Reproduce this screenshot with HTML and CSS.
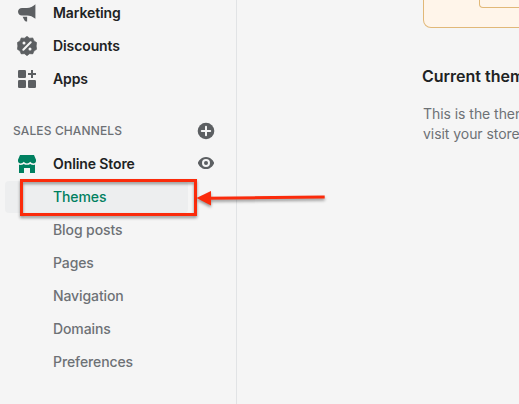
FILE: index.html
```html
<!DOCTYPE html>
<html lang="en">
<head>
    <meta charset="UTF-8">
    <meta name="viewport" content="width=device-width, initial-scale=1.0">
    <title>Online Store - Themes</title>
    <link rel="stylesheet" href="styles.css">
</head>

<body>
    <div class="app">
        <nav class="sidebar">
            <a class="nav-item">
                <svg class="icon" viewBox="0 0 20 20"><path d="M18.4 1.2v14.6c-2.5-2.1-5.4-3.3-8.4-3.3H5A4 4 0 0 1 1 8.8c0-2.200 1.800-3.700 4-3.700h5c3-.2 6-1.700 8.400-3.900z"/><path d="M5.600 13.700h4.500v4.700c-1.500 0-2.200-.4-2.800-1.500z"/></svg>
                <span class="label">Marketing</span>
            </a>
            <a class="nav-item">
                <svg class="icon" viewBox="0 0 20 20"><path d="M10 .3l2.600 1.900 3.200-.3 1.200 3 2.700 1.700L19.200 10l.5 3.200-2.700 1.800-1.200 2.900-3.200-.2L10 19.700l-2.600-2-3.200.2L3 15 .3 13.200.8 10 .3 6.600 3 4.900l1.200-3 3.200.3z" stroke="#5c5f62" stroke-width=".6" stroke-linejoin="round"/><path d="M6.300 13.700l7.400-7.400" stroke="#f5f5f5" stroke-width="2" stroke-linecap="round"/><circle cx="7" cy="7" r="1.500" fill="#f5f5f5"/><circle cx="13" cy="13" r="1.500" fill="#f5f5f5"/></svg>
                <span class="label">Discounts</span>
            </a>
            <a class="nav-item">
                <svg class="icon" viewBox="0 0 20 20"><rect x="1" y="1" width="8" height="8" rx="1.300"/><rect x="1" y="11" width="8" height="8" rx="1.300"/><rect x="11" y="11" width="8" height="8" rx="1.300"/><path d="M14 1h2v3h3v2h-3v3h-2V6h-3V4h3z"/></svg>
                <span class="label">Apps</span>
            </a>

            <div class="section-title">
                <span>SALES CHANNELS</span>
                <svg class="icon" viewBox="0 0 20 20"><circle cx="10" cy="10" r="8.300"/><path d="M10 5.800v8.400M5.800 10h8.400" stroke="#f5f5f5" stroke-width="2" stroke-linecap="round"/></svg>
            </div>

            <a class="nav-item">
                <svg class="icon green" viewBox="0 0 20 20"><path d="M3 1h14l2 4.800V7c0 1.500-1.200 2.400-2.600 2.400-1.200 0-2.200-.7-3.200-1.600-1 1-2 1.600-3.200 1.600S7.800 8.800 6.800 7.800C5.800 8.700 4.800 9.400 3.600 9.400 2.200 9.400 1 8.500 1 7V5.800z"/><path d="M2 10.800c1.900.4 3.500 0 4.800-.9 2 1.200 4.400 1.200 6.400 0 1.300.9 2.900 1.300 4.800.9V19h-5v-5H7v5H2z"/></svg>
                <span class="label">Online Store</span>
                <svg class="icon eye" viewBox="0 0 20 20"><path fill-rule="evenodd" d="M18 9.600C17.600 8.500 15.200 4 10 4S2.400 8.500 2 9.600v.8C2.400 11.500 4.800 16 10 16s7.600-4.500 8-5.600zM10 14a4 4 0 1 1 0-8 4 4 0 0 1 0 8z"/><circle cx="10" cy="10" r="2"/></svg>
            </a>
            <a class="sub-item active">Themes</a>
            <a class="sub-item">Blog posts</a>
            <a class="sub-item">Pages</a>
            <a class="sub-item">Navigation</a>
            <a class="sub-item">Domains</a>
            <a class="sub-item">Preferences</a>
        </nav>

        <main class="content">
            <div class="banner">
                <div class="banner-button"></div>
            </div>
            <h2 class="heading">Current theme</h2>
            <p class="description">This is the theme customers see when they<br>visit your store.</p>
        </main>
    </div>

    <!-- callout for the Themes link -->
    <div class="highlight"></div>
    <svg class="arrow" viewBox="0 0 140 30">
        <path d="M18 15.200L134.700 14" stroke="#fb2b0b" stroke-width="3"/>
        <path d="M6.500 15.100L21 8v14.500z" fill="#fb2b0b"/>
    </svg>
</body>
</html>
```
FILE: styles.css
```css
* {
    box-sizing: border-box;
}
body {
    margin: 0;
    height: 404px;
    overflow: hidden;
    background-color: #f5f5f5;
    font-family: Inter, "Liberation Sans", sans-serif;
    font-size: 14px;
    color: #202223;
}
.app {
    display: flex;
    height: 404px;
}
.sidebar {
    flex: none;
    width: 237px;
    height: 407px;
    margin-top: -3px;
    border-right: 1px solid #e1e3e5;
}
.nav-item {
    display: flex;
    align-items: center;
    height: 32px;
    margin-bottom: 1px;
    padding-left: 17px;
    padding-right: 20px;
    font-weight: 600;
    letter-spacing: -0.1px;
}
.icon {
    flex: none;
    width: 20px;
    height: 20px;
    fill: #5c5f62;
}
.green {
    fill: #008060;
}
.eye {
    margin-left: auto;
    position: relative;
    top: -1px;
}
.label {
    margin-left: 16px;
    padding-bottom: 2px;
}
.section-title {
    display: flex;
    align-items: center;
    justify-content: space-between;
    height: 32px;
    margin-top: 20px;
    margin-bottom: 1px;
    padding-left: 13px;
    padding-right: 20px;
    font-size: 12px;
    font-weight: 500;
    letter-spacing: 0.12px;
    color: #6d7175;
}
.section-title span {
    padding-bottom: 1px;
}
.sub-item {
    display: flex;
    align-items: center;
    height: 32px;
    margin-left: 5px;
    margin-right: 48px;
    margin-bottom: 1px;
    padding-left: 48px;
    padding-bottom: 1px;
    border-radius: 4px;
    font-weight: 500;
    letter-spacing: -0.1px;
    color: #6d7175;
}
.active {
    background-color: #edeeef;
    color: #008060;
}
.content {
    flex: 1;
    min-width: 0;
    overflow: hidden;
    padding-left: 186px;
}
.banner {
    width: 400px;
    height: 28px;
    padding-left: 55px;
    border: 1px solid #e1b878;
    border-top: 0;
    border-radius: 0 0 8px 8px;
    background-color: #fff5ea;
}
.banner-button {
    width: 150px;
    height: 8px;
    border: 1px solid #e1b878;
    border-top: 0;
    border-radius: 0 0 4px 4px;
}
.heading {
    margin: 36px 0 0 -1px;
    font-size: 16px;
    line-height: 24px;
    font-weight: 600;
    white-space: nowrap;
}
.description {
    margin: 16px 0 0;
    line-height: 20px;
    letter-spacing: -0.05px;
    white-space: nowrap;
    color: #6d7175;
}
.highlight {
    position: absolute;
    left: 20px;
    top: 179px;
    width: 177px;
    height: 37px;
    border: 3px solid #fb2b0b;
    filter: drop-shadow(0 2px 1.5px rgba(0, 0, 0, 0.4));
}
.arrow {
    position: absolute;
    left: 190px;
    top: 183px;
    width: 140px;
    height: 30px;
    overflow: visible;
    filter: drop-shadow(0 2px 1.5px rgba(0, 0, 0, 0.4));
}
```
